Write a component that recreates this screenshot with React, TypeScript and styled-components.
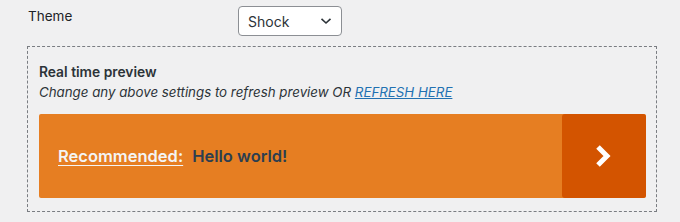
import React from "react";
import styled, { createGlobalStyle } from "styled-components";

const GlobalStyle = createGlobalStyle`
  body {
    margin: 0;
    background: #f0f0f1;
    font-family: Inter, "Liberation Sans", Arial, sans-serif;
    color: #3c434a;
  }
`;

const Page = styled.div`
  width: 680px;
  height: 222px;
  padding: 6px 24px 0 27px;
  box-sizing: border-box;
`;

const FieldRow = styled.div`
  display: flex;
  align-items: flex-start;
  height: 40px;
`;

const Label = styled.label`
  width: 210px;
  padding-left: 1px;
  padding-top: 2px;
  font-size: 13.5px;
  color: #1d2327;
`;

const SelectBox = styled.div`
  width: 104px;
  height: 30px;
  box-sizing: border-box;
  border: 1px solid #8c8f94;
  border-radius: 4px;
  background: #fff;
  display: flex;
  align-items: center;
  justify-content: space-between;
  padding: 0 9px 0 9px;
  font-size: 14px;
  color: #2c3338;
`;

const PreviewBox = styled.div`
  width: 630px;
  height: 166px;
  box-sizing: border-box;
  border: 1px dashed #7a7d82;
  padding: 16px 10px 0 11px;
`;

const Title = styled.div`
  font-size: 13.8px;
  font-weight: 600;
  color: #2c3338;
  line-height: 18px;
`;

const Hint = styled.div`
  font-size: 13.3px;
  font-style: italic;
  color: #2c3338;
  line-height: 20px;
  margin-top: 1px;

  a {
    color: #2271b1;
    text-decoration: underline;
  }
`;

const Bar = styled.div`
  margin-top: 12px;
  height: 84px;
  display: flex;
  background: #e67e22;
  border-radius: 2px;
`;

const Message = styled.div`
  flex: 1;
  display: flex;
  align-items: center;
  padding-left: 19px;
  font-size: 16.5px;
  font-weight: 600;
`;

const Recommended = styled.a`
  color: #f4f4f4;
  text-decoration: underline;
  text-underline-offset: 3px;
  margin-right: 9px;
`;

const Headline = styled.span`
  color: #2c3e50;
`;

const GoButton = styled.div`
  width: 84px;
  background: #d35400;
  border-radius: 3px;
  display: flex;
  align-items: center;
  justify-content: center;
`;

export default function App() {
  return (
    <>
      <GlobalStyle />
      <Page>
        <FieldRow>
          <Label>Theme</Label>
          <SelectBox>
            <span>Shock</span>
            <svg width="12" height="8" viewBox="0 0 12 8">
              <path d="M1.5 1.8 L6 6 L10.5 1.8" fill="none" stroke="#2c3338" strokeWidth="1.6" />
            </svg>
          </SelectBox>
        </FieldRow>
        <PreviewBox>
          <Title>Real time preview</Title>
          <Hint>
            Change any above settings to refresh preview OR <a href="#">REFRESH HERE</a>
          </Hint>
          <Bar>
            <Message>
              <Recommended href="#">Recommended:</Recommended>
              <Headline>Hello world!</Headline>
            </Message>
            <GoButton>
              <svg width="20" height="26" viewBox="0 0 20 26">
                <path d="M4 4 L13 13 L4 22" fill="none" stroke="#fff" strokeWidth="5" strokeLinejoin="miter" />
              </svg>
            </GoButton>
          </Bar>
        </PreviewBox>
      </Page>
    </>
  );
}
